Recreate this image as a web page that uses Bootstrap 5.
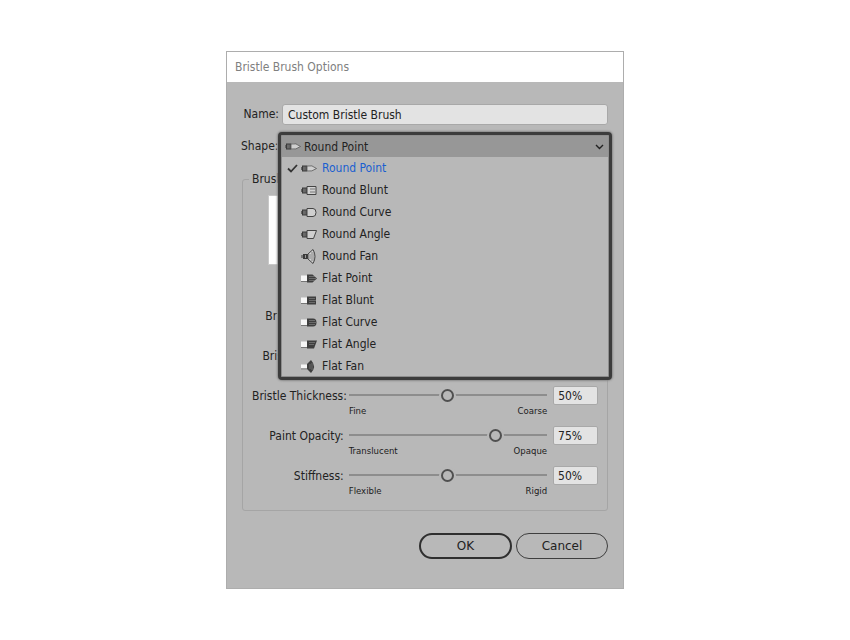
<!DOCTYPE html>
<html lang="en"><head><meta charset="utf-8"><title>Bristle Brush Options</title>
<link rel="stylesheet" href="https://cdn.jsdelivr.net/npm/bootstrap@5.3.0/dist/css/bootstrap.min.css">
<style>
body{background:#fff;font-family:"DejaVu Sans","Noto Sans",sans-serif;font-stretch:condensed;font-size:12px;line-height:16px;color:#222}
.dlg{width:398px;height:538px;margin:51px auto 0;border:1px solid #adadad;background:#b8b8b8;position:relative}
.dlg-head{height:30px;background:#fff;color:#808080;padding-left:8px;line-height:31px}
.dlg-body{padding:21px 15px 0 15px}
.name-row{height:22px}
.lbl-end{width:37px;margin-right:3px;text-align:right;white-space:nowrap}
.name-field{width:326px;height:21px;background:#e3e3e3;border:1px solid #a8a8a8;border-radius:3px;padding-left:5px;line-height:21px}
.shape-row{height:22px;margin-top:10px;margin-left:-1px}
.group-box{margin-top:22px;height:332px;width:366px;border:1px solid #a5a5a5;border-radius:3px;position:relative;padding:15px 9px 0 9px}
.legend-txt{position:absolute;left:6px;top:-9px;background:#b8b8b8;padding:0 3px}
.preview-box{height:70px;margin-left:16px;margin-right:16px;background:#fff;border:1px solid #c8c8c8}
.rows{margin-top:41px}
.slide-row{height:40px}
.slide-lbl{width:92px;margin-right:5px;text-align:right;white-space:nowrap;line-height:20px}
.slide-mid{width:199px}
.track-line{height:2px;background:#8d8d8d;margin-top:8px;position:relative}
.knob{position:absolute;top:-5.5px;width:13px;height:13px;margin-left:-6.5px;border-radius:50%;background:#b8b8b8;border:2.500px solid #505050;box-shadow:0 0 0 2px #b8b8b8}
.ends{font-size:9.500px;line-height:12px;margin-top:9px;color:#1c1c1c}
.val-box{width:45px;height:19px;margin-left:6px;background:#e3e3e3;border:1px solid #a8a8a8;border-radius:2px;padding-left:4px;line-height:18px}
.foot{margin-top:22px;gap:4px}
.pill{height:26px;width:92px;border-radius:13px;background:transparent;color:#222;padding:0;font-size:12px;line-height:22px;border:1px solid #3e3e3e}
.pill-main{border:2px solid #2f2f2f;width:93px}
.pop{position:absolute;left:51px;top:80px;width:334px;height:248px;border:3px solid #3c3c3c;border-radius:4px;background:#b8b8b8;box-shadow:inset 0 0 0 1px #8e8e8e,0 0 2px 1px #8a8a8a}
.pop-top{height:21px;margin:1px 1px 0;background:#979797;padding-left:3px;gap:3px;line-height:20px}
.pop-item{height:22px;line-height:21px}
.tick{width:16px;padding-left:6px}
.ico{flex:none}
.pop-on{color:#1a5fd0}
.pop-item .ico{margin-left:4px;margin-right:5px}
</style></head><body>
<svg width="0" height="0" class="position-absolute">
<defs>
<g id="h1"><rect x="1" y="2.500" width="5" height="6" fill="#3a3a3a"/><rect x="2.500" y="3.500" width="1" height="4" fill="#9a9a9a"/><rect x="4.500" y="3.500" width=".8" height="4" fill="#8a8a8a"/><rect x="0" y="4" width="1" height="3" fill="#666"/></g>
<g id="h2"><rect x="0" y="2.500" width="6" height="5.500" fill="#f6f6f6"/><rect x="0" y="8" width="6" height=".8" fill="#666"/></g>
<g id="st"><path d="M8 3.500h6M8 5.500h7M8 7.500h6" stroke="#8a8a8a" stroke-width=".6"/></g>
</defs>
</svg>
<div class="dlg">
<div class="dlg-head">Bristle Brush Options</div>
<div class="dlg-body">
<div class="name-row d-flex align-items-center"><div class="lbl-end">Name:</div><div class="name-field">Custom Bristle Brush</div></div>
<div class="shape-row d-flex align-items-center"><div class="lbl-end">Shape:</div></div>
<div class="group-box">
<span class="legend-txt">Brush Shape Preview</span>
<div class="preview-box"></div>
<div class="rows">
<div class="slide-row d-flex"><div class="slide-lbl">Bristle Length:</div><div class="slide-mid"><div class="track-line"></div></div></div>
<div class="slide-row d-flex"><div class="slide-lbl">Bristle Density:</div><div class="slide-mid"><div class="track-line"></div></div></div>
<div class="slide-row d-flex"><div class="slide-lbl">Bristle Thickness:</div><div class="slide-mid"><div class="track-line"><span class="knob" style="left:49.700%"></span></div><div class="ends d-flex justify-content-between"><span>Fine</span><span>Coarse</span></div></div><div class="val-box">50%</div></div>
<div class="slide-row d-flex"><div class="slide-lbl">Paint Opacity:</div><div class="slide-mid"><div class="track-line"><span class="knob" style="left:73.800%"></span></div><div class="ends d-flex justify-content-between"><span>Translucent</span><span>Opaque</span></div></div><div class="val-box">75%</div></div>
<div class="slide-row d-flex"><div class="slide-lbl">Stiffness:</div><div class="slide-mid"><div class="track-line"><span class="knob" style="left:49.700%"></span></div><div class="ends d-flex justify-content-between"><span>Flexible</span><span>Rigid</span></div></div><div class="val-box">50%</div></div>
</div>
</div>
<div class="foot d-flex justify-content-end"><button type="button" class="btn pill pill-main">OK</button><button type="button" class="btn pill">Cancel</button></div>
</div>
<div class="pop">
<div class="pop-top d-flex align-items-center"><svg class="ico" width="16" height="11" viewBox="0 0 16 11"><use href="#h1"/><path d="M6 3 Q11 1.500 15.500 5.500 Q11 9 6 8Z" fill="#cfcfcf" stroke="#555" stroke-width=".8"/></svg><span>Round Point</span><svg class="ms-auto me-1" width="9" height="6" viewBox="0 0 9 6"><path d="M1 1l3.500 3.500L8 1" fill="none" stroke="#222" stroke-width="1.400"/></svg></div>
<div class="pop-list">
<div class="pop-item d-flex align-items-center pop-on"><span class="tick"><svg width="11" height="9" viewBox="0 0 11 9"><path d="M1 4.500l3 3L10 1" fill="none" stroke="#333" stroke-width="1.800"/></svg></span><svg class="ico" width="16" height="11" viewBox="0 0 16 11"><use href="#h1"/><path d="M6 3 Q11 1.500 15.500 5.500 Q11 9 6 8Z" fill="#cfcfcf" stroke="#555" stroke-width=".8"/></svg><span>Round Point</span></div>
<div class="pop-item d-flex align-items-center"><span class="tick"></span><svg class="ico" width="16" height="11" viewBox="0 0 16 11"><use href="#h1"/><path d="M6 1.500h9v8H6z" fill="#d2d2d2" stroke="#444"/><path d="M9 4h5M9 7h5" stroke="#777"/></svg><span>Round Blunt</span></div>
<div class="pop-item d-flex align-items-center"><span class="tick"></span><svg class="ico" width="16" height="11" viewBox="0 0 16 11"><use href="#h1"/><path d="M6 1.500h6q3 0 3 4t-3 4H6z" fill="#cfcfcf" stroke="#444"/></svg><span>Round Curve</span></div>
<div class="pop-item d-flex align-items-center"><span class="tick"></span><svg class="ico" width="16" height="11" viewBox="0 0 16 11"><use href="#h1"/><path d="M6 1.500h9.500l-3 8H6z" fill="#cfcfcf" stroke="#444"/></svg><span>Round Angle</span></div>
<div class="pop-item d-flex align-items-center"><span class="tick"></span><svg class="ico" width="16" height="16" viewBox="0 0 16 16"><rect x="0" y="7" width="2" height="3" fill="#777"/><rect x="2" y="6" width="5" height="5" fill="#3a3a3a"/><rect x="4" y="7" width="1" height="3" fill="#999"/><path d="M7 6L12 1.500q4 7 0 14L7 11z" fill="#d2d2d2" stroke="#444"/><path d="M9 6v5M11 4v9M13 4v9" stroke="#666" stroke-width=".7"/></svg><span>Round Fan</span></div>
<div class="pop-item d-flex align-items-center"><span class="tick"></span><svg class="ico" width="16" height="11" viewBox="0 0 16 11"><use href="#h2"/><path d="M6 1.500h5.500l4.500 4-4.500 4H6z" fill="#3f3f3f"/><use href="#st"/></svg><span>Flat Point</span></div>
<div class="pop-item d-flex align-items-center"><span class="tick"></span><svg class="ico" width="16" height="11" viewBox="0 0 16 11"><use href="#h2"/><path d="M6 1.500h9v8H6z" fill="#3f3f3f"/><use href="#st"/></svg><span>Flat Blunt</span></div>
<div class="pop-item d-flex align-items-center"><span class="tick"></span><svg class="ico" width="16" height="11" viewBox="0 0 16 11"><use href="#h2"/><path d="M6 1.500h6q3.500 0 3.500 4t-3.500 4H6z" fill="#3f3f3f"/><use href="#st"/></svg><span>Flat Curve</span></div>
<div class="pop-item d-flex align-items-center"><span class="tick"></span><svg class="ico" width="16" height="11" viewBox="0 0 16 11"><use href="#h2"/><path d="M6 1.500h10l-3 8H6z" fill="#3f3f3f"/><path d="M8 3.500h6M8 5.500h5" stroke="#8a8a8a" stroke-width=".6"/></svg><span>Flat Angle</span></div>
<div class="pop-item d-flex align-items-center"><span class="tick"></span><svg class="ico" width="16" height="16" viewBox="0 0 16 16"><rect x="0" y="6.500" width="6" height="4" fill="#f6f6f6"/><rect x="0" y="10.500" width="6" height=".8" fill="#666"/><path d="M6 6L10 2q6 6.500 0 13L6 11z" fill="#3f3f3f"/><path d="M9 6v5M11 5v7" stroke="#8a8a8a" stroke-width=".6"/></svg><span>Flat Fan</span></div>
</div>
</div>
</div>
</body></html>
